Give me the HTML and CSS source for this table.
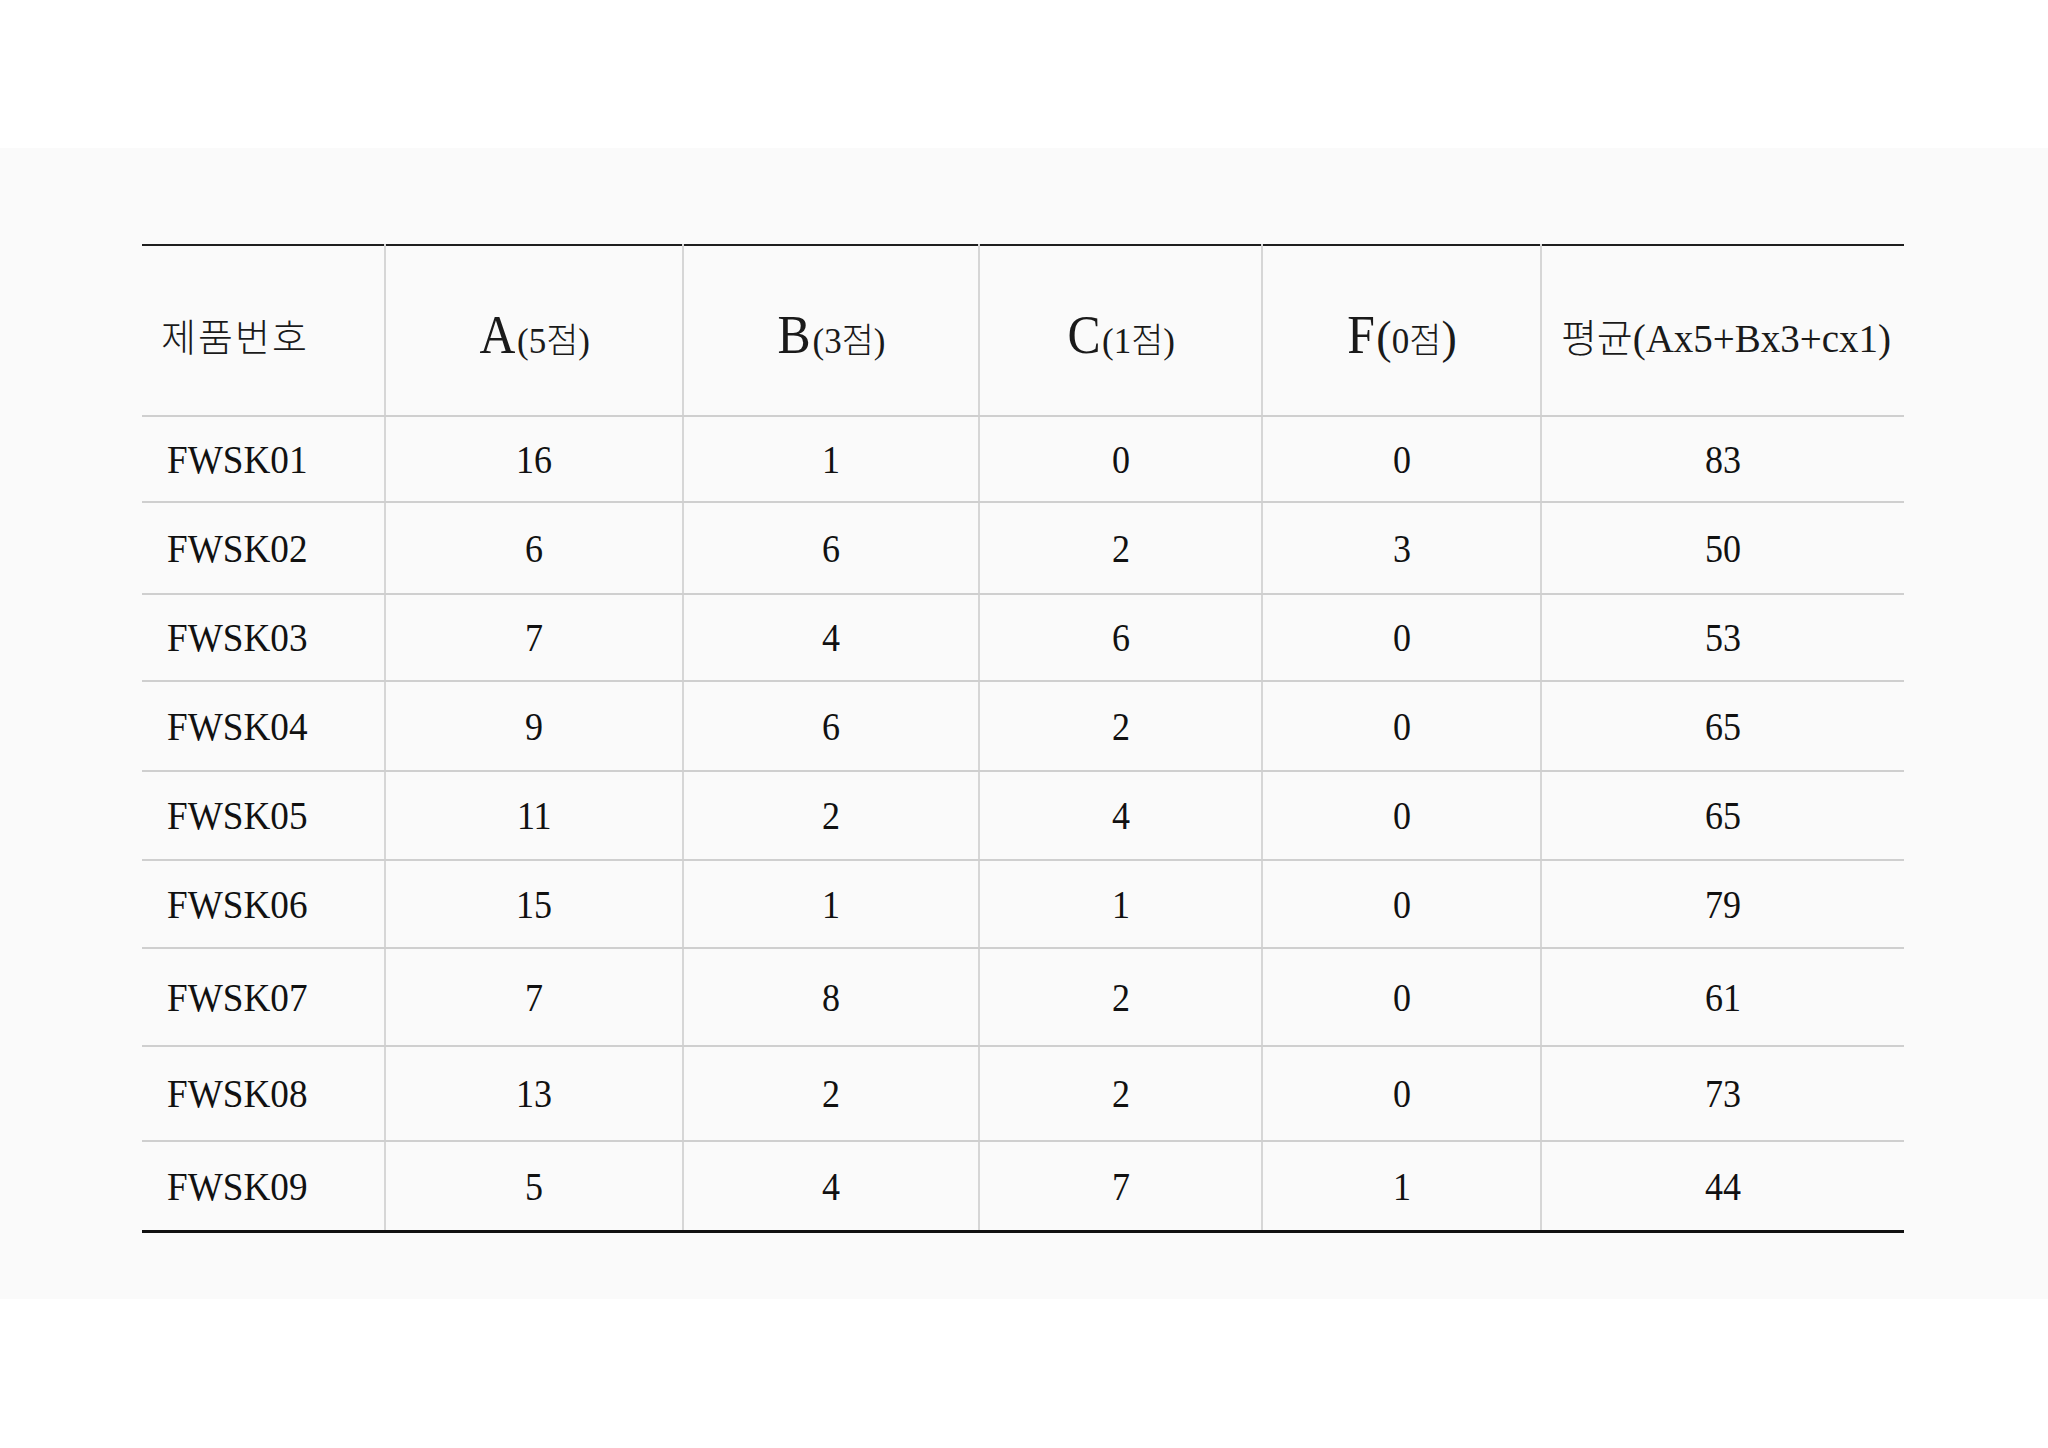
FILE: index.html
```html
<!DOCTYPE html>
<html lang="ko">
<head>
<meta charset="utf-8">
<title>제품 평가표</title>
<link rel="stylesheet" href="styles.css">
</head>
<body>
<section class="band">
  <table class="grade">
    <colgroup>
      <col class="c0"><col class="c1"><col class="c2"><col class="c3"><col class="c4"><col class="c5">
    </colgroup>
    <thead>
      <tr class="head">
        <th class="first"><span class="ko">제품번호</span></th>
        <th><span class="big">A</span><span class="sub">(5점)</span></th>
        <th><span class="big">B</span><span class="sub">(3점)</span></th>
        <th><span class="big">C</span><span class="sub">(1점)</span></th>
        <th><span class="big">F</span><span class="paren">(</span><span class="sub">0점</span><span class="paren">)</span></th>
        <th><span class="avg">평균(Ax5+Bx3+cx1)</span></th>
      </tr>
    </thead>
    <tbody>
      <tr class="r1"><td class="first"><span class="v">FWSK01</span></td><td><span class="v">16</span></td><td><span class="v">1</span></td><td><span class="v">0</span></td><td><span class="v">0</span></td><td><span class="v">83</span></td></tr>
      <tr class="r2"><td class="first"><span class="v">FWSK02</span></td><td><span class="v">6</span></td><td><span class="v">6</span></td><td><span class="v">2</span></td><td><span class="v">3</span></td><td><span class="v">50</span></td></tr>
      <tr class="r3"><td class="first"><span class="v">FWSK03</span></td><td><span class="v">7</span></td><td><span class="v">4</span></td><td><span class="v">6</span></td><td><span class="v">0</span></td><td><span class="v">53</span></td></tr>
      <tr class="r4"><td class="first"><span class="v">FWSK04</span></td><td><span class="v">9</span></td><td><span class="v">6</span></td><td><span class="v">2</span></td><td><span class="v">0</span></td><td><span class="v">65</span></td></tr>
      <tr class="r5"><td class="first"><span class="v">FWSK05</span></td><td><span class="v">11</span></td><td><span class="v">2</span></td><td><span class="v">4</span></td><td><span class="v">0</span></td><td><span class="v">65</span></td></tr>
      <tr class="r6"><td class="first"><span class="v">FWSK06</span></td><td><span class="v">15</span></td><td><span class="v">1</span></td><td><span class="v">1</span></td><td><span class="v">0</span></td><td><span class="v">79</span></td></tr>
      <tr class="r7"><td class="first"><span class="v">FWSK07</span></td><td><span class="v">7</span></td><td><span class="v">8</span></td><td><span class="v">2</span></td><td><span class="v">0</span></td><td><span class="v">61</span></td></tr>
      <tr class="r8"><td class="first"><span class="v">FWSK08</span></td><td><span class="v">13</span></td><td><span class="v">2</span></td><td><span class="v">2</span></td><td><span class="v">0</span></td><td><span class="v">73</span></td></tr>
      <tr class="r9"><td class="first"><span class="v">FWSK09</span></td><td><span class="v">5</span></td><td><span class="v">4</span></td><td><span class="v">7</span></td><td><span class="v">1</span></td><td><span class="v">44</span></td></tr>
    </tbody>
  </table>
</section>
</body>
</html>
```

FILE: styles.css
```css
html, body {
  margin: 0;
  padding: 0;
  background: #ffffff;
}

body {
  font-family: "Liberation Serif", "Noto Sans CJK KR", serif;
  color: #111111;
}

.band {
  margin-top: 148px;
  height: 1151px;
  box-sizing: border-box;
  padding-top: 96px;
  background: #fafafa;
}

.grade {
  margin-left: 142px;
  width: 1762px;
  table-layout: fixed;
  border-collapse: collapse;
  border-top: 2px solid #1e1e1e;
  border-bottom: 3px solid #111111;
}

.c0 { width: 243px; }
.c1 { width: 298px; }
.c2 { width: 296px; }
.c3 { width: 283px; }
.c4 { width: 279px; }
.c5 { width: 363px; }

.grade th,
.grade td {
  padding: 0;
  text-align: center;
  vertical-align: middle;
  font-weight: normal;
  border-bottom: 2px solid #cfcfcf;
  border-left: 2px solid #d6d6d6;
}

.grade tbody tr:last-child td {
  border-bottom: 3px solid #111111;
}

.grade .first {
  border-left: none;
  text-align: left;
  padding-left: 25px;
}

.head th {
  height: 171px;
  padding-top: 8px;
  box-sizing: border-box;
  color: #1a1a1a;
  white-space: nowrap;
}

.ko {
  font-family: "Noto Sans CJK KR", sans-serif;
  font-weight: 300;
  font-size: 38px;
  letter-spacing: 2px;
  position: relative;
  left: -6px;
}

.big {
  font-size: 54px;
  display: inline-block;
  transform: scaleX(0.92);
}

.sub {
  font-size: 35px;
  font-weight: 300;
}

.paren {
  font-size: 46px;
}

.avg {
  font-size: 39px;
  font-weight: 300;
  position: relative;
  left: 3px;
}

.v {
  display: inline-block;
  font-size: 40px;
  transform: scaleX(0.9);
}

.first .v {
  transform-origin: left center;
  transform: scaleX(0.93);
}

.r1 td { height: 84px; }
.r2 td { height: 90px; }
.r3 td { height: 85px; }
.r4 td { height: 88px; }
.r5 td { height: 87px; }
.r6 td { height: 86px; }
.r7 td { height: 96px; }
.r8 td { height: 93px; }
.r9 td { height: 88px; }
```
